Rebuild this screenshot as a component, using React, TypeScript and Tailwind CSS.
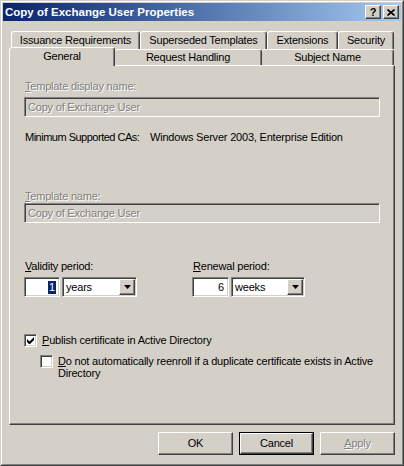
import React from 'react';

const face = 'bg-[#d4d0c8]';
const raised =
  'border border-t-white border-l-white border-r-[#404040] border-b-[#404040] shadow-[inset_-1px_-1px_0_#808080]';
const sunken =
  'border border-t-[#808080] border-l-[#808080] border-r-white border-b-white shadow-[inset_1px_1px_0_#404040,inset_-1px_-1px_0_#d4d0c8]';
const grayText = 'text-[#808080] [text-shadow:1px_1px_0_#ffffff]';

const BackTab: React.FC<{ label: string; w: string }> = ({ label, w }) => (
  <div
    className={`${w} h-[18px] flex items-center justify-center rounded-t-[3px] border-t border-l border-r border-t-white border-l-white border-r-[#404040] shadow-[inset_-1px_0_0_#808080]`}
  >
    {label}
  </div>
);

const FrontTab: React.FC<{ label: string; w: string; active?: boolean }> = ({ label, w, active }) =>
  active ? (
    <div
      className={`${w} h-[19px] -mb-[1px] relative z-10 ${face} flex items-start justify-center pt-[2px] rounded-t-[3px] border-t border-l border-r border-t-white border-l-white border-r-[#404040] shadow-[inset_-1px_0_0_#808080]`}
    >
      {label}
    </div>
  ) : (
    <div
      className={`${w} h-[16px] flex items-center justify-center rounded-t-[3px] border-t border-r border-t-white border-r-[#404040] shadow-[inset_-1px_0_0_#808080]`}
    >
      {label}
    </div>
  );

const DropArrow: React.FC = () => (
  <div className={`w-[16px] h-[16px] ${face} ${raised} flex items-center justify-center`}>
    <svg width="7" height="4" viewBox="0 0 7 4">
      <path d="M0 0h7L3.5 4z" fill="#000" />
    </svg>
  </div>
);

const Select: React.FC<{ value: string; w: string }> = ({ value, w }) => (
  <div className={`${w} h-[20px] bg-white ${sunken} flex items-center justify-between pl-[3px] pr-[1px]`}>
    <span>{value}</span>
    <DropArrow />
  </div>
);

const Check: React.FC<{ checked?: boolean }> = ({ checked }) => (
  <div className={`w-[13px] h-[13px] shrink-0 bg-white ${sunken} flex items-center justify-center`}>
    {checked && (
      <svg width="7" height="7" viewBox="0 0 7 7">
        <path d="M0 2v3l2 2h1l4-4V0L2.5 4.5z" fill="#000" />
      </svg>
    )}
  </div>
);

const Btn: React.FC<{ children: React.ReactNode; def?: boolean; disabled?: boolean }> = ({ children, def, disabled }) =>
  def ? (
    <div className="w-[75px] h-[23px] border border-black">
      <div className={`w-full h-full ${face} ${raised} flex items-center justify-center`}>{children}</div>
    </div>
  ) : (
    <div className={`w-[75px] h-[23px] ${face} ${raised} flex items-center justify-center ${disabled ? grayText : ''}`}>
      {children}
    </div>
  );

const App: React.FC = () => {
  return (
    <div className="w-[404px] h-[466px] font-['Liberation_Sans',Arial,sans-serif] text-[11px] leading-[13px] tracking-[-0.2px] text-black">
      <div className={`w-full h-full ${face} border border-t-[#d4d0c8] border-l-[#d4d0c8] border-r-[#404040] border-b-[#404040]`}>
        <div className="w-full h-full border border-t-white border-l-white border-r-[#808080] border-b-[#808080] p-[1px] flex flex-col">
          {/* title bar */}
          <div className="h-[18px] bg-gradient-to-r from-[#0a246a] to-[#a6caf0] flex items-center justify-between pl-[2px] pr-[2px]">
            <span className="text-white font-bold text-[11.5px] tracking-normal">Copy of Exchange User Properties</span>
            <div className="flex items-center">
              <div className={`w-[16px] h-[14px] ${face} ${raised} flex items-center justify-center font-bold text-[11px] leading-none`}>?</div>
              <div className={`w-[16px] h-[14px] ml-[2px] ${face} ${raised} flex items-center justify-center`}>
                <svg width="8" height="7" viewBox="0 0 8 7">
                  <path d="M0.5 0.5l7 6M7.5 0.5l-7 6" stroke="#000" strokeWidth="1.6" />
                </svg>
              </div>
            </div>
          </div>

          {/* tabs */}
          <div className="mt-[10px] ml-[8px] flex">
            <BackTab label="Issuance Requirements" w="w-[129px]" />
            <BackTab label="Superseded Templates" w="w-[127px]" />
            <BackTab label="Extensions" w="w-[71px]" />
            <BackTab label="Security" w="w-[56px]" />
          </div>
          <div className="ml-[6px] h-[16px] flex items-end">
            <FrontTab label="General" w="w-[106px]" active />
            <FrontTab label="Request Handling" w="w-[147px]" />
            <FrontTab label="Subject Name" w="w-[132px]" />
          </div>

          {/* panel */}
          <div className="ml-[6px] w-[386px] h-[360px] border border-t-white border-l-white border-r-[#404040] border-b-[#404040] shadow-[inset_-1px_-1px_0_#808080] pl-[14px] flex flex-col">
            <div className={`mt-[14px] ml-[1px] ${grayText}`}>
              <u>T</u>emplate display name:
            </div>
            <div className={`mt-[4px] w-[356px] h-[20px] ${sunken} flex items-center pl-[3px] ${grayText}`}>
              Copy of Exchange User
            </div>
            <div className="mt-[14px] ml-[1px] flex whitespace-nowrap">
              <span className="w-[125px] shrink-0 tracking-[-0.5px]">Minimum Supported CAs:</span>
              <span>Windows Server 2003, Enterprise Edition</span>
            </div>
            <div className={`mt-[46px] ml-[1px] ${grayText}`}>
              <u>T</u>emplate name:
            </div>
            <div className={`w-[356px] h-[20px] ${sunken} flex items-center pl-[3px] ${grayText}`}>
              Copy of Exchange User
            </div>

            <div className="mt-[37px] flex">
              <div className="w-[168px] flex flex-col">
                <div className="ml-[1px]">
                  <u>V</u>alidity period:
                </div>
                <div className="mt-[4px] flex gap-[2px]">
                  <div className={`w-[36px] h-[20px] bg-white ${sunken} flex items-center justify-end pr-[3px]`}>
                    <span className="bg-[#0a246a] text-white px-[1px]">1</span>
                  </div>
                  <Select value="years" w="w-[75px]" />
                </div>
              </div>
              <div className="flex flex-col">
                <div className="ml-[1px]">
                  <u>R</u>enewal period:
                </div>
                <div className="mt-[4px] flex gap-[2px]">
                  <div className={`w-[37px] h-[20px] bg-white ${sunken} flex items-center justify-end pr-[4px]`}>6</div>
                  <Select value="weeks" w="w-[74px]" />
                </div>
              </div>
            </div>

            <div className="mt-[37px] flex items-center gap-[5px]">
              <Check checked />
              <span>
                <u>P</u>ublish certificate in Active Directory
              </span>
            </div>
            <div className="mt-[8px] ml-[16px] flex items-start gap-[5px]">
              <Check />
              <p className="w-[330px] leading-[12px] first-letter:underline">
                Do not automatically reenroll if a duplicate certificate exists in Active Directory
              </p>
            </div>
          </div>

          {/* buttons */}
          <div className="mt-[7px] w-[392px] flex justify-end gap-[6px]">
            <Btn>OK</Btn>
            <Btn def>Cancel</Btn>
            <Btn disabled>
              <u>A</u>pply
            </Btn>
          </div>
        </div>
      </div>
    </div>
  );
};

export default App;
